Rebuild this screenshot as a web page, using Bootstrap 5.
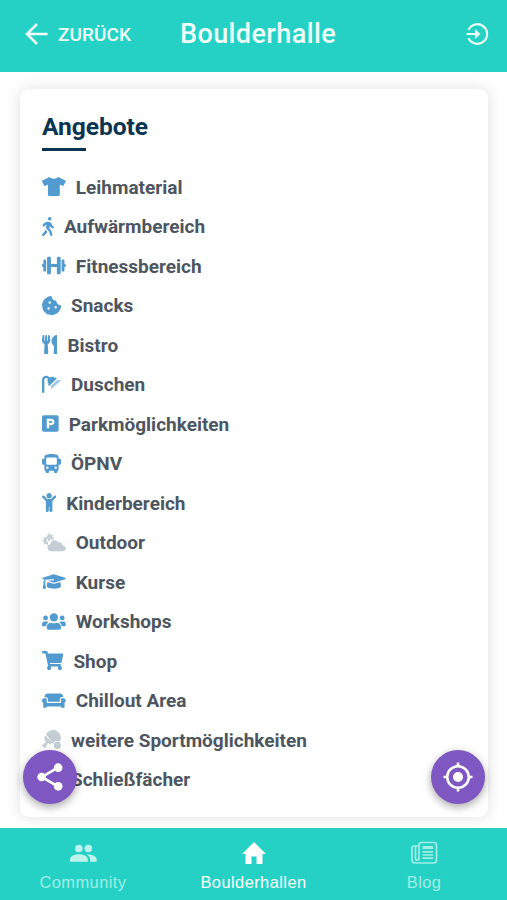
<!DOCTYPE html>
<html lang="de">
<head>
<meta charset="utf-8">
<meta name="viewport" content="width=device-width, initial-scale=1">
<title>Boulderhalle</title>
<link href="https://cdn.jsdelivr.net/npm/bootstrap@5.3.0/dist/css/bootstrap.min.css" rel="stylesheet">
<style>
body{font-family:Roboto,sans-serif;height:900px;overflow:hidden;background:#fefefe}
.topbar{height:72px;background:#25d1c4;color:#effffc;padding:0 18px 4px 25px}
.back-label{font-size:19px;font-weight:500;margin-left:10px;width:122px;letter-spacing:.08px;padding-top:2px}
.page-title{font-size:27px;font-weight:500;letter-spacing:.4px}
.main-area{padding:17px 19px 11px 20px}
.offers{border:0;border-radius:9px;box-shadow:0 0 14px rgba(0,0,0,.12);padding:23px 22px 0;background:#fff}
.offers-title{font-size:24.6px;line-height:29px;font-weight:700;color:#0b3550;letter-spacing:-.07px}
.rule{width:44px;height:3px;background:#0b3550;margin:7px 0 16px}
.offer{height:39.52px;gap:10px;font-size:19px;font-weight:700;color:#4d5660}
.offer span{padding-top:2px}
.offer svg{height:19px;width:auto;fill:#519bd0;flex:none}
.offer svg.off{fill:#c2ced3}
.fab{position:absolute;top:750px;width:54px;height:54px;background:#7e57c2;border:0;box-shadow:0 3px 8px rgba(0,0,0,.35)}
.fab-share{left:23px}.fab-locate{left:431px}
.bottombar{height:72px;background:#25d1c4;font-family:"Liberation Sans",sans-serif;font-size:16.5px;letter-spacing:.4px;color:#a0eee5}
.bottombar .tab{width:170.6px;color:inherit;padding-top:11px;line-height:20px;flex:none}
.bottombar{justify-content:center}
.bottombar svg{margin-bottom:5px}
</style>
<script src="https://cdn.jsdelivr.net/npm/bootstrap@5.3.0/dist/js/bootstrap.bundle.min.js"></script>
</head>
<body class="d-flex flex-column position-relative">
<header class="topbar d-flex align-items-center flex-shrink-0">
  <svg width="23" height="22" viewBox="0 0 23 22" fill="none" stroke="currentColor" stroke-width="2.5"><path d="M22.5 11H2M12 1 2 11l10 10"/></svg>
  <span class="back-label">ZURÜCK</span>
  <span class="page-title">Boulderhalle</span>
  <svg class="ms-auto" width="23" height="23" viewBox="0 0 23 23" fill="none" stroke="currentColor" stroke-width="2.1"><path d="M2.500 6.700a9.800 9.800 0 1 1 0 8.600M.5 11h12.500"/><path d="M9 6l5.400 5L9 16z" fill="currentColor" stroke="none"/></svg>
</header>
<main class="main-area flex-grow-1 d-flex">
  <section class="card offers flex-grow-1">
    <h1 class="offers-title mb-0">Angebote</h1>
    <div class="rule"></div>
    <div class="offer d-flex align-items-center"><svg viewBox="0 0 640 512"><path d="M631.2 96.5L436.5 0C416.4 27.8 371.9 47.2 320 47.2S223.6 27.8 203.5 0L8.8 96.5c-7.9 4-11.1 13.6-7.2 21.5l57.2 114.5c4 7.9 13.6 11.1 21.5 7.2l56.6-27.7c10.6-5.2 23 2.5 23 14.4V480c0 17.7 14.3 32 32 32h256c17.7 0 32-14.3 32-32V226c0-11.8 12.4-19.6 23-14.4l56.6 27.7c7.9 4 17.5.8 21.5-7.2L638.3 118c4-7.9.8-17.6-7.1-21.5z"/></svg><span>Leihmaterial</span></div>
    <div class="offer d-flex align-items-center"><svg viewBox="0 0 320 512"><path d="M208 96c26.500 0 48-21.500 48-48S234.500 0 208 0s-48 21.500-48 48 21.500 48 48 48zm94.500 149.100l-23.300-11.800-9.700-29.400c-14.700-44.600-55.700-75.800-102.200-75.900-36-.1-55.900 10.100-93.300 25.200-21.600 8.700-39.300 25.200-49.700 46.200L17.600 213c-7.800 15.800-1.500 35 14.200 42.900 15.600 7.900 34.600 1.500 42.500-14.300L81 228c3.500-7 9.300-12.500 16.500-15.400l26.800-10.800-15.200 60.700c-5.200 20.800.4 42.900 14.900 58.800l59.900 65.400c7.200 7.900 12.300 17.400 14.900 27.700l18.300 73.300c4.300 17.100 21.700 27.600 38.800 23.300 17.100-4.300 27.600-21.700 23.300-38.800l-22.200-89c-2.600-10.300-7.700-19.900-14.900-27.700l-45.500-49.700 17.200-68.700 5.500 16.500c5.300 16.100 16.700 29.400 31.700 37l23.300 11.800c15.600 7.900 34.600 1.500 42.500-14.300 7.700-15.700 1.400-35.100-14.300-43zM73.600 385.800c-3.200 8.100-8 15.400-14.200 21.500l-50 50.100c-12.500 12.500-12.500 32.800 0 45.300s32.700 12.500 45.200 0l59.400-59.400c6.100-6.100 10.900-13.400 14.200-21.500l13.500-33.800c-55.300-60.300-38.700-41.800-47.400-53.700z"/></svg><span>Aufwärmbereich</span></div>
    <div class="offer d-flex align-items-center"><svg viewBox="0 0 640 512"><path d="M168 20h40q32 0 32 32v164h160V52q0-32 32-32h40q32 0 32 32v408q0 32-32 32h-40q-32 0-32-32V296H240v164q0 32-32 32h-40q-32 0-32-32V52q0-32 32-32zM68 92h16q28 0 28 28v272q0 28-28 28H68q-32 0-32-32v-92H20q-20 0-20-20v-40q0-20 20-20h16v-92q0-32 32-32zM572 92h-16q-28 0-28 28v272q0 28 28 28h16q32 0 32-32v-92h16q20 0 20-20v-40q0-20-20-20h-16v-92q0-32-32-32z"/></svg><span>Fitnessbereich</span></div>
    <div class="offer d-flex align-items-center"><svg viewBox="0 0 512 512"><path fill-rule="evenodd" d="M510.400 255.800c-69-1-125-57-126-127-70 0-127-56-128-126-27-4-55 1-79 13l-69 35a132 132 0 0 0-57 57l-35 69a136 136 0 0 0-13 82l12 76a133 133 0 0 0 38 73l54 55a132 132 0 0 0 73 37l77 12c28 4 56 0 82-13l69-35a132 132 0 0 0 57-57l35-69c13-25 17-54 10-82zM176 368a32 32 0 1 1 0-64 32 32 0 0 1 0 64zm32-160a32 32 0 1 1 0-64 32 32 0 0 1 0 64zm160 128a32 32 0 1 1 0-64 32 32 0 0 1 0 64z"/></svg><span>Snacks</span></div>
    <div class="offer d-flex align-items-center"><svg viewBox="0 0 416 512"><path d="M207.900 15.200c.8 4.700 16.100 94.500 16.100 128.800 0 52.300-27.800 89.600-68.900 104.600L168 486.700c.7 13.700-10.200 25.300-24 25.300H80c-13.700 0-24.700-11.500-24-25.300l12.900-238.100C27.700 233.600 0 196.200 0 144 0 109.600 15.300 19.900 16.100 15.200 19.300-5.100 61.400-5.400 64 16.300v141.200c1.300 3.400 15.100 3.200 16 0 1.400-25.300 7.900-139.200 8-141.800 3.300-20.800 44.700-20.800 47.900 0 .2 2.700 6.600 116.500 8 141.800.9 3.200 14.800 3.400 16 0V16.300c2.600-21.600 44.800-21.400 48-1.100zm119.200 285.700l-15 185.100c-1.200 14 9.900 26 23.900 26h56c13.300 0 24-10.700 24-24V24c0-13.200-10.700-24-24-24-82.500 0-221.400 178.500-64.900 300.900z"/></svg><span>Bistro</span></div>
    <div class="offer d-flex align-items-center"><svg viewBox="0 0 512 512"><path d="M0 480V140C0 66 46 20 112 20c40 0 72 16 94 46 50-26 106-20 146 16l22-17 26 29-208 204-29-27 18-26c-36-42-40-91-22-136-11-17-26-25-49-25-31 0-46 19-46 60v336z"/><path opacity=".55" d="M248 286 400 142l110-5v22l-46 18 3 27-50 15 2 30-53 13-1 29-44 10-5 35-41 7-2 31-25 3z"/></svg><span>Duschen</span></div>
    <div class="offer d-flex align-items-center"><svg viewBox="0 0 448 512"><path fill-rule="evenodd" d="M48 32h352q48 0 48 48v352q0 48-48 48H48q-48 0-48-48V80q0-48 48-48zm80 96v256h64v-80h48c60 0 96-38 96-88s-36-88-96-88zm64 60h42c24 0 36 10 36 28s-12 28-36 28h-42z"/></svg><span>Parkmöglichkeiten</span></div>
    <div class="offer d-flex align-items-center"><svg viewBox="0 0 512 512"><path fill-rule="evenodd" d="M256 0C390 0 448 36 448 80v48h32q32 0 32 32v96q0 32-32 32h-32v128q0 32-32 32v32q0 32-32 32h-32q-32 0-32-32v-32H192v32q0 32-32 32h-32q-32 0-32-32v-32q-32 0-32-32V288H32q-32 0-32-32v-96q0-32 32-32h32V80C64 36 122 0 256 0zM144 96q-32 0-32 32v128q0 32 32 32h224q32 0 32-32V128q0-32-32-32zm0 304a32 32 0 1 0 0-64 32 32 0 0 0 0 64zm224 0a32 32 0 1 0 0-64 32 32 0 0 0 0 64z"/></svg><span>ÖPNV</span></div>
    <div class="offer d-flex align-items-center"><svg viewBox="0 0 384 512"><path d="M120 72c0-39.765 32.235-72 72-72s72 32.235 72 72c0 39.764-32.235 72-72 72s-72-32.236-72-72zm254.627 1.373c-12.496-12.497-32.758-12.497-45.254 0L242.745 160H141.254L54.627 73.373c-12.496-12.497-32.758-12.497-45.254 0-12.497 12.497-12.497 32.758 0 45.255L104 213.254V480c0 17.673 14.327 32 32 32h16c17.673 0 32-14.327 32-32V368h16v112c0 17.673 14.327 32 32 32h16c17.673 0 32-14.327 32-32V213.254l94.627-94.627c12.497-12.496 12.497-32.757 0-45.254z"/></svg><span>Kinderbereich</span></div>
    <div class="offer d-flex align-items-center"><svg class="off" viewBox="0 0 640 512"><path d="M192 0l34 62 68-20-20 68 62 34-36 32q-24-6-46 4a66 66 0 1 0-82 78q-12 22-14 46l-16 32-28-46-68 20 20-68-66-38 62-34-20-68 68 20z"/><circle cx="188" cy="172" r="42"/><path d="M240 490a98 98 0 0 1-12-194c1-62 53-104 112-104 45 0 80 23 98 60 58-16 116 22 114 85 49 5 88 33 88 75 0 46-36 78-86 78z"/></svg><span>Outdoor</span></div>
    <div class="offer d-flex align-items-center"><svg viewBox="0 0 640 512"><path d="M622 153 344 67q-24-7-48 0L18 153q-36 14 0 30l48 15q-17 20-18 47c-20 12-21 40-3 52L20 430q-4 18 14 18h60q18 0 14-18L83 297c16-11 16-37 0-50q2-20 22-35l210-22 5 31-164 17 140 44q24 7 48 0l278-85q36-16 0-44zM352 313q-32 10-64 0l-145-45-15 116c0 35 86 64 192 64s192-29 192-64l-15-116z"/></svg><span>Kurse</span></div>
    <div class="offer d-flex align-items-center"><svg viewBox="0 0 640 512"><circle cx="96" cy="160" r="64"/><circle cx="544" cy="160" r="64"/><circle cx="320" cy="144" r="112"/><path d="M64 256h64q28 0 47 20c-36 20-59 51-64 108H32q-32 0-32-32v-32q0-64 64-64zm512 0h-64q-28 0-47 20c36 20 59 51 64 108h79q32 0 32-32v-32q0-64-64-64zM243 288h8q69 32 138 0h8c64 0 115 51 115 115v29q0 48-48 48H176q-48 0-48-48v-29c0-64 51-115 115-115z"/></svg><span>Workshops</span></div>
    <div class="offer d-flex align-items-center"><svg viewBox="0 0 576 512"><path d="M528.120 301.319l47.273-208C578.806 78.301 567.391 64 551.990 64H159.208l-9.166-44.810C147.758 8.021 137.930 0 126.529 0H24C10.745 0 0 10.745 0 24v16c0 13.255 10.745 24 24 24h69.883l70.248 343.435C147.325 417.100 136 435.222 136 456c0 30.928 25.072 56 56 56s56-25.072 56-56c0-15.674-6.447-29.835-16.824-40h209.647C430.447 426.165 424 440.326 424 456c0 30.928 25.072 56 56 56s56-25.072 56-56c0-22.172-12.888-41.332-31.579-50.405l5.517-24.276c3.413-15.018-8.002-29.319-23.403-29.319H218.117l-6.545-32h293.145c11.206 0 20.920-7.754 23.403-18.681z"/></svg><span>Shop</span></div>
    <div class="offer d-flex align-items-center"><svg viewBox="0 0 640 512"><path d="M160 224v64h320v-64c0-35.300 28.700-64 64-64h32c0-53-43-96-96-96H160c-53 0-96 43-96 96h32c35.300 0 64 28.700 64 64zm416-32h-32c-17.700 0-32 14.300-32 32v96H128v-96c0-17.700-14.300-32-32-32H64c-35.300 0-64 28.700-64 64 0 23.600 13 44 32 55.100V432c0 8.800 7.200 16 16 16h64c8.800 0 16-7.200 16-16v-16h384v16c0 8.800 7.200 16 16 16h64c8.800 0 16-7.200 16-16V311.100c19-11.100 32-31.500 32-55.100 0-35.300-28.700-64-64-64z"/></svg><span>Chillout Area</span></div>
    <div class="offer d-flex align-items-center"><svg class="off" viewBox="0 0 512 512"><path d="M108 114C194-22 350-26 439 61c87 86 85 183 30 254-70-47-154-10-168 59zM88 151l190 190-57 54-53-53-75 132q-12 20-32 5l-48-48q-20-17 5-34l91-70C58 285 48 213 88 151z"/><circle cx="414" cy="414" r="96"/></svg><span>weitere Sportmöglichkeiten</span></div>
    <div class="offer d-flex align-items-center"><svg viewBox="0 0 512 512"><path fill-rule="evenodd" d="M64 0h384q64 0 64 64v352q0 64-64 64v32h-64v-32H128v32H64v-32q-64 0-64-64V64Q0 0 64 0zm16 80v320h224V80z"/></svg><span>Schließfächer</span></div>
  </section>
</main>
<button class="fab fab-share rounded-circle d-flex align-items-center justify-content-center p-0" aria-label="Teilen"><svg width="26" height="28" viewBox="0 0 28 30" fill="#fff" stroke="#fff"><path d="M22.500 5 5 15l17.500 10" fill="none" stroke-width="2.800"/><g stroke="none"><circle cx="22.800" cy="5" r="4.700"/><circle cx="5" cy="15" r="4.700"/><circle cx="22.800" cy="25" r="4.700"/></g></svg></button>
<button class="fab fab-locate rounded-circle d-flex align-items-center justify-content-center p-0" aria-label="Standort"><svg width="30" height="30" viewBox="0 0 30 30" fill="none" stroke="#fff" stroke-width="2.600"><circle cx="15" cy="15" r="10.800"/><circle cx="15" cy="15" r="5" fill="#fff" stroke="none"/><path d="M15 .5V5M15 25v4.500M.5 15H5M25 15h4.500"/></svg></button>
<nav class="bottombar d-flex flex-shrink-0" aria-label="Navigation">
  <a class="tab d-flex flex-column align-items-center text-decoration-none" href="#"><svg width="28" height="28" viewBox="0 0 28 28" fill="#bdf4ee"><circle cx="9.800" cy="9.500" r="3.800"/><circle cx="19.300" cy="9.500" r="3.800"/><path d="M1 22.800v-2.300c0-3.300 5-5.200 8.900-5.200s8.900 1.900 8.900 5.200v2.300zM17.500 15.500c4.500-.5 10.200 1.500 10.200 5v2.300h-6.500v-2.300c0-2.200-1.500-3.900-3.700-5z"/></svg><span>Community</span></a>
  <a class="tab d-flex flex-column align-items-center text-decoration-none text-white" href="#"><svg width="28" height="28" viewBox="0 0 28 28" fill="currentColor"><path d="M14 3 2 15h3.500v10h6v-7.500h5V25h6V15H26z"/></svg><span>Boulderhallen</span></a>
  <a class="tab d-flex flex-column align-items-center text-decoration-none" href="#"><svg width="28" height="28" viewBox="0 0 28 28" fill="none" stroke="currentColor" stroke-width="1.700"><path d="M9 21V6q0-2.500 2.500-2.500H24q2.500 0 2.500 2.500v15q0 3-3 3h-18Q2 24 2 20.500V9q0-2 2-2h5M5.500 7v12.500q0 1.700 1.700 1.700T9 19.500M12.500 12.800h10.500M12.500 16h10.500M12.500 19.200h10.500"/><path d="M12.500 8.500h10.500" stroke-width="3"/></svg><span>Blog</span></a>
</nav>
</body>
</html>
